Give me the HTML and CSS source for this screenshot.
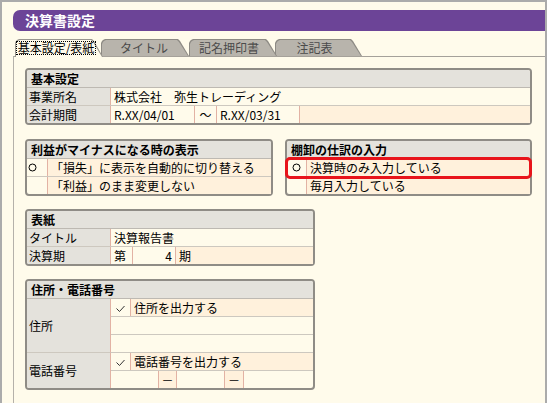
FILE: index.html
```html
<!DOCTYPE html>
<html lang="ja">
<head>
<meta charset="utf-8">
<title>決算書設定</title>
<link rel="stylesheet" href="styles.css">
</head>
<body>
<div class="frame">
  <div class="titlebar">決算書設定</div>
  <div class="tabs">
    <div class="tab active t1"><span class="focus">基本設定/表紙</span></div>
    <div class="tab t2">タイトル</div>
    <div class="tab t3">記名押印書</div>
    <div class="tab t4">注記表</div>
  </div>
  <div class="content">
    <div class="box b-basic">
      <div class="row head">基本設定</div>
      <div class="row">
        <div class="cell label">事業所名</div>
        <div class="cell grow">株式会社　弥生トレーディング</div>
      </div>
      <div class="row">
        <div class="cell label">会計期間</div>
        <div class="cell w-date1">R.XX/04/01</div>
        <div class="cell w-tilde center">～</div>
        <div class="cell w-date2">R.XX/03/31</div>
        <div class="cell grow orange"></div>
      </div>
    </div>

    <div class="pair">
      <div class="box b-minus">
        <div class="row head">利益がマイナスになる時の表示</div>
        <div class="row">
          <div class="cell circ circ-l"><svg width="9" height="9" viewBox="0 0 9 9"><circle cx="4.5" cy="4.5" r="3.5" fill="none" stroke="#000"/></svg></div>
          <div class="cell grow orange">「損失」に表示を自動的に切り替える</div>
        </div>
        <div class="row">
          <div class="cell circ circ-l"></div>
          <div class="cell grow orange">「利益」のまま変更しない</div>
        </div>
      </div>
      <div class="box b-inv">
        <div class="row head">棚卸の仕訳の入力</div>
        <div class="row sel">
          <div class="cell circ circ-r"><svg width="9" height="9" viewBox="0 0 9 9"><circle cx="4.5" cy="4.5" r="3.5" fill="none" stroke="#000"/></svg></div>
          <div class="cell grow orange">決算時のみ入力している</div>
        </div>
        <div class="row">
          <div class="cell circ circ-r"></div>
          <div class="cell grow orange">毎月入力している</div>
        </div>
      </div>
    </div>

    <div class="box b-cover">
      <div class="row head">表紙</div>
      <div class="row">
        <div class="cell label">タイトル</div>
        <div class="cell grow">決算報告書</div>
      </div>
      <div class="row">
        <div class="cell label">決算期</div>
        <div class="cell w-dai">第</div>
        <div class="cell w-num right">4</div>
        <div class="cell grow orange">期</div>
      </div>
    </div>

    <div class="box b-addr">
      <div class="row head">住所・電話番号</div>
      <div class="group">
        <div class="glabel">住所</div>
        <div class="gbody">
          <div class="row">
            <div class="cell chk"><svg width="9" height="8" viewBox="0 0 9 8"><path d="M0.5 3.5 L3.5 6.5 L8.5 1" fill="none" stroke="#333"/></svg></div>
            <div class="cell grow orange">住所を出力する</div>
          </div>
          <div class="row"></div>
          <div class="row"></div>
        </div>
      </div>
      <div class="group">
        <div class="glabel">電話番号</div>
        <div class="gbody">
          <div class="row">
            <div class="cell chk"><svg width="9" height="8" viewBox="0 0 9 8"><path d="M0.5 3.5 L3.5 6.5 L8.5 1" fill="none" stroke="#333"/></svg></div>
            <div class="cell grow orange">電話番号を出力する</div>
          </div>
          <div class="row">
            <div class="cell w-tel"></div>
            <div class="cell w-dash1 center orange">－</div>
            <div class="cell w-tel"></div>
            <div class="cell w-dash2 center orange">－</div>
            <div class="cell grow"></div>
          </div>
        </div>
      </div>
    </div>
  </div>
</div>
</body>
</html>
```

FILE: styles.css
```css
html, body {
  margin: 0;
  height: 100%;
}
body {
  background: #fffbeb;
  font-family: "Noto Sans CJK JP", "Noto Sans", sans-serif;
  font-size: 12px;
  color: #000;
}
.frame {
  box-sizing: border-box;
  height: 403px;
  border: 2px solid #ababab;
  border-bottom: 0;
  padding-top: 8px;
  display: flex;
  flex-direction: column;
}
.titlebar {
  margin-left: 11px;
  height: 21px;
  background: #6c4497;
  border-radius: 7px 0 0 7px;
  color: #fff;
  font-weight: bold;
  font-size: 14px;
  line-height: 21px;
  padding-left: 12px;
  flex: none;
}

/* tabs */
.tabs {
  display: flex;
  align-items: flex-start;
  margin: 8px 0 0 13px;
  height: 17px;
  position: relative;
  z-index: 1;
  flex: none;
}
.tab {
  position: relative;
  box-sizing: border-box;
  width: 88px;
  height: 17px;
  flex: none;
  display: flex;
  align-items: center;
  justify-content: center;
  padding-right: 8px;
  color: #4b4b4b;
  font-size: 12px;
  line-height: 14px;
}
.tab::before,
.tab::after {
  content: "";
  position: absolute;
  z-index: -1;
  clip-path: polygon(0 4px, 1px 2px, 2px 1px, 4px 0, calc(100% - 11px) 0, calc(100% - 9px) 2px, 100% 100%, 0 100%);
}
.tab::before {
  inset: 0;
  background: #8d8a84;
}
.tab::after {
  inset: 1px 1px 0 1px;
  background: #b8b4ac;
}
.tab.active {
  height: 18px;
  color: #000;
}
.tab.active::before { background: #99958e; }
.tab.active::after { background: #fffbeb; }
.t1 { z-index: 5; margin-right: -2px; padding-right: 6px; }
.t2 { z-index: 4; margin-right: 0; padding-right: 2px; }
.t3 { z-index: 3; margin-right: -2px; width: 88px; }
.t4 { z-index: 2; width: 87px; }
.focus {
  border: 1px dotted #000;
  padding: 0 1px;
  line-height: 12px;
}

/* content */
.content {
  flex: 1;
  margin-left: 11px;
  border-left: 1px solid #b5b1aa;
  border-top: 1px solid #a5a19a;
  padding: 11px 0 0 11px;
  display: flex;
  flex-direction: column;
  gap: 13px;
}
.pair {
  display: flex;
  gap: 12px;
}
.box {
  box-sizing: border-box;
  border: 2px solid #8f8c86;
  border-radius: 4px;
  background: #fffbeb;
}
.b-basic { width: 507px; margin-bottom: 1px; }
.b-minus { width: 248px; }
.b-inv { width: 247px; }
.b-cover { width: 290px; }
.b-addr { width: 290px; }

.row {
  box-sizing: border-box;
  height: 18px;
  display: flex;
  border-bottom: 1px solid #cdc8bf;
}
.box > .row:last-child,
.box > .group:last-child .gbody > .row:last-child {
  border-bottom: 0;
  height: 17px;
}
.head {
  background: #e4e2dc;
  border-bottom: 1px solid #bdb9b2;
  border-radius: 2px 2px 0 0;
  font-weight: bold;
  align-items: center;
  padding-left: 4px;
  line-height: 17px;
}
.cell {
  box-sizing: border-box;
  flex: none;
  display: flex;
  align-items: center;
  padding: 0 3px;
  border-right: 1px solid #e2b2a4;
  line-height: 17px;
  white-space: nowrap;
}
.cell.grow {
  flex: 1;
  border-right: 0;
}
.center { justify-content: center; }
.right { justify-content: flex-end; }
.orange { background: #fff1dc; }
.label {
  width: 84px;
  background: #e4e2dc;
  padding-left: 2px;
}
.box > .row:last-child .label { border-bottom-left-radius: 2px; }
.w-date1 { width: 84px; }
.w-tilde { width: 22px; padding: 0; }
.w-date2 { width: 83px; }
.w-dai { width: 22px; }
.w-num { width: 43px; }
.circ { padding: 0; }
.circ-l { width: 21px; padding-left: 1px; }
.circ-r { width: 20px; justify-content: center; }
.chk {
  width: 20px;
  padding: 0 0 3px 0;
  justify-content: center;
  align-items: flex-end;
}
.w-tel { width: 48px; }
.w-dash1 { width: 18px; padding: 0; }
.w-dash2 { width: 19px; padding: 0; }

.sel {
  outline: 3px solid #e8141b;
  outline-offset: -1px;
  border-radius: 3px;
  position: relative;
  z-index: 1;
}

.group {
  display: flex;
}
.glabel {
  box-sizing: border-box;
  width: 84px;
  flex: none;
  background: #e4e2dc;
  border-right: 1px solid #e2b2a4;
  border-bottom: 1px solid #cdc8bf;
  padding-left: 2px;
  display: flex;
  align-items: center;
}
.group:last-child .glabel {
  border-bottom: 0;
  border-bottom-left-radius: 2px;
}
.gbody {
  flex: 1;
  display: flex;
  flex-direction: column;
}
```
